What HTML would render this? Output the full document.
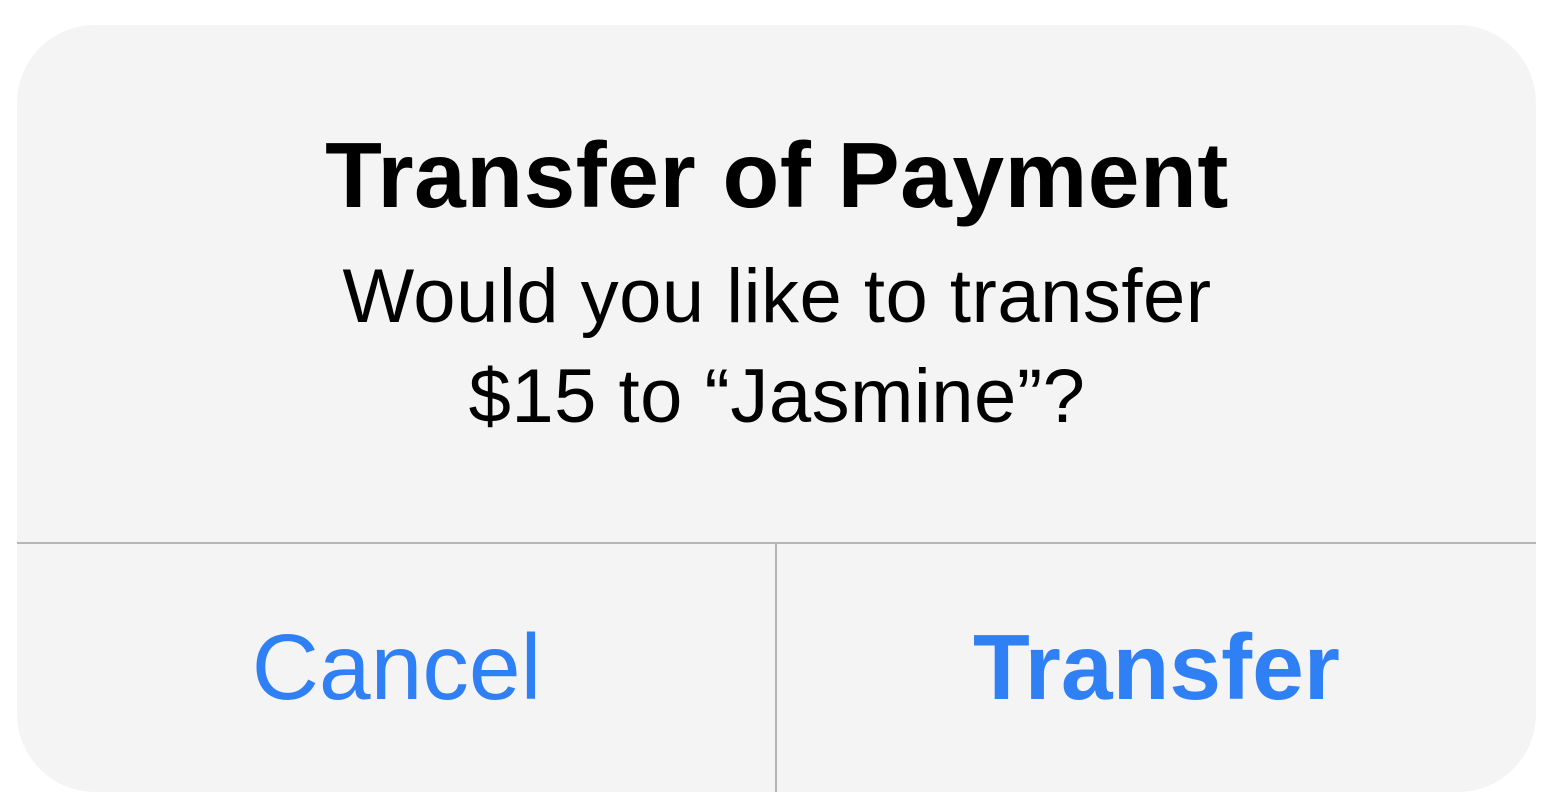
<!DOCTYPE html>
<html><head><style>
html,body{margin:0;padding:0;background:#fff;width:1554px;height:806px;overflow:hidden;font-family:"Liberation Sans",Arial,sans-serif}
.card{position:absolute;left:17px;top:25px;width:1519px;height:767px;background:#f4f4f4;border-radius:78px;overflow:hidden}
.t{position:absolute;left:0;width:1554px;text-align:center;white-space:nowrap}
.hl{position:absolute;left:17px;top:542px;width:1519px;height:2px;background:#b5b5b5}
.vl{position:absolute;left:775px;top:544px;width:2px;height:248px;background:#b5b5b5}
</style></head><body>
<div class="card"></div>
<div class="t" style="top:129px;font-size:93px;line-height:93px;font-weight:bold;color:#000;letter-spacing:0.5px">Transfer of Payment</div>
<div class="t" style="top:247px;font-size:76px;line-height:100px;color:#000;letter-spacing:0.5px">Would you like to transfer<br>$15 to “Jasmine”?</div>
<div class="hl"></div><div class="vl"></div>
<div class="t" style="left:17px;width:759px;top:621px;font-size:93px;line-height:93px;color:#3080f5">Cancel</div>
<div class="t" style="left:777px;width:759px;top:621px;font-size:93px;line-height:93px;font-weight:bold;color:#3080f5">Transfer</div>
</body></html>
